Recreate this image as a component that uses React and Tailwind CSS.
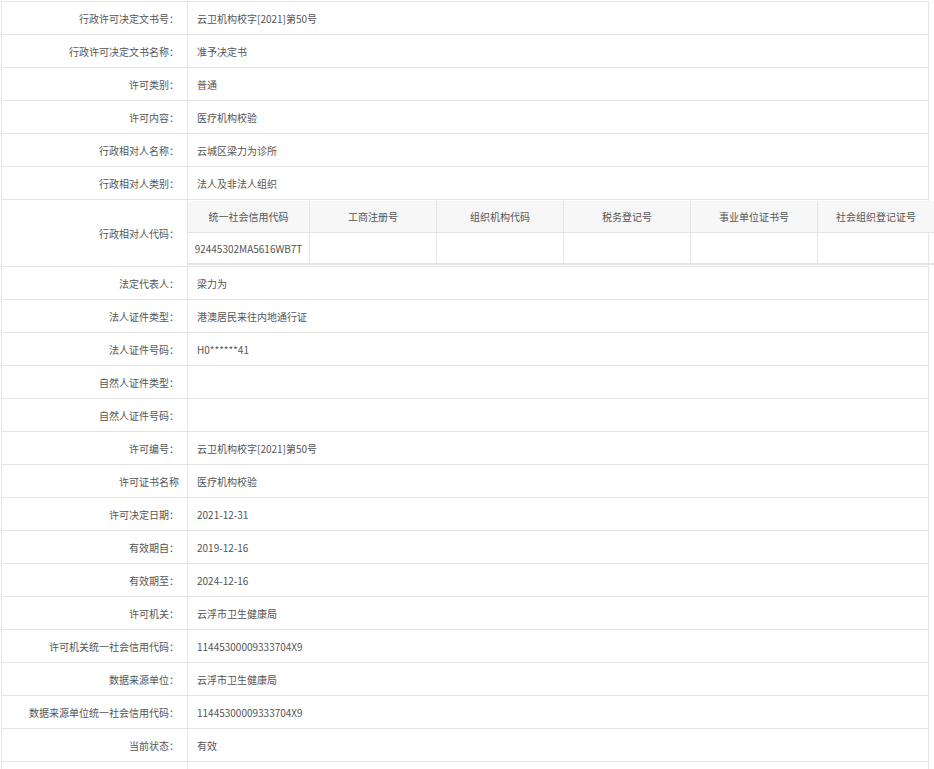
const rows1 = [
  ["行政许可决定文书号：", "云卫机构校字[2021]第50号"],
  ["行政许可决定文书名称：", "准予决定书"],
  ["许可类别：", "普通"],
  ["许可内容：", "医疗机构校验"],
  ["行政相对人名称：", "云城区梁力为诊所"],
  ["行政相对人类别：", "法人及非法人组织"],
];
const rows2 = [
  ["法定代表人：", "梁力为"],
  ["法人证件类型：", "港澳居民来往内地通行证"],
  ["法人证件号码：", "H0******41"],
  ["自然人证件类型：", ""],
  ["自然人证件号码：", ""],
  ["许可编号：", "云卫机构校字[2021]第50号"],
  ["许可证书名称", "医疗机构校验"],
  ["许可决定日期：", "2021-12-31"],
  ["有效期自：", "2019-12-16"],
  ["有效期至：", "2024-12-16"],
  ["许可机关：", "云浮市卫生健康局"],
  ["许可机关统一社会信用代码：", "11445300009333704X9"],
  ["数据来源单位：", "云浮市卫生健康局"],
  ["数据来源单位统一社会信用代码：", "11445300009333704X9"],
  ["当前状态：", "有效"],
  ["", ""],
];
const heads = ["统一社会信用代码", "工商注册号", "组织机构代码", "税务登记号", "事业单位证书号", "社会组织登记证号"];
const widths = ["w-[122px]", "w-[127px]", "w-[127px]", "w-[127px]", "w-[127px]", "w-[117px]"];

function Row({ l, v }) {
  return (
    <div className="flex h-[33px] border-b border-[#e4e4e4]">
      <div className="w-[186px] shrink-0 border-r border-[#e4e4e4] flex items-center justify-end pr-[8px]">{l}</div>
      <div className="flex items-center pl-[9px]">{v}</div>
    </div>
  );
}

export default function App() {
  return (
    <div className="w-[934px] h-[769px] overflow-hidden bg-white text-[10px] text-[#555]" style={{ fontFamily: '"Noto Sans CJK SC", "Liberation Sans", sans-serif' }}>
      <div className="ml-[1px] mt-[1px] w-[928px] border-l border-r border-t border-[#e4e4e4]">
        {rows1.map((r, i) => <Row key={i} l={r[0]} v={r[1]} />)}
        <div className="flex h-[67px] border-b border-[#e4e4e4]">
          <div className="w-[186px] shrink-0 border-r border-[#e4e4e4] flex items-center justify-end pr-[8px]">行政相对人代码：</div>
          <div className="flex flex-col w-[747px] shrink-0 pt-[1px]">
            <div className="flex h-[32px] bg-[#f7f7f7] border-b border-[#e4e4e4]">
              {heads.map((h, i) => (
                <div key={i} className={`${widths[i]} shrink-0 border-r border-[#e4e4e4] flex items-center justify-center`}>{h}</div>
              ))}
            </div>
            <div className="flex h-[32px] border-b-2 border-[#e4e4e4]">
              {heads.map((h, i) => (
                <div key={i} className={`${widths[i]} shrink-0 border-r border-[#e4e4e4] flex items-center justify-center`}>{i === 0 ? "92445302MA5616WB7T" : ""}</div>
              ))}
            </div>
          </div>
        </div>
        {rows2.map((r, i) => <Row key={i} l={r[0]} v={r[1]} />)}
      </div>
    </div>
  );
}
